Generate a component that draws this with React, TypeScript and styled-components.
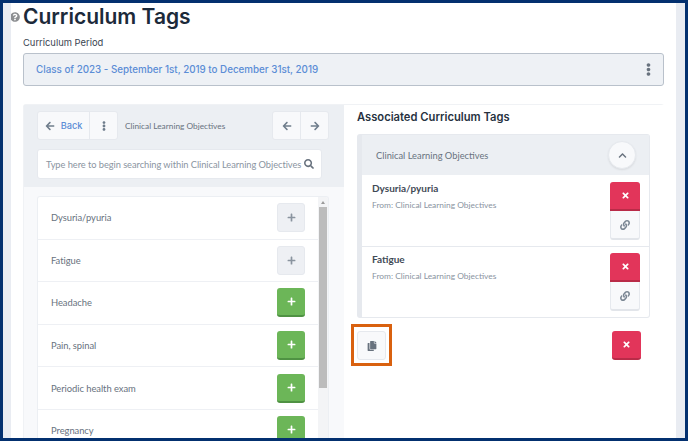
import styled, { createGlobalStyle } from 'styled-components';
import { FaArrowLeft, FaArrowRight, FaChevronUp, FaCopy, FaEllipsisV, FaLink, FaPlus, FaQuestionCircle, FaSearch, FaTimes } from 'react-icons/fa';

const HEADING = '"Inter", "Liberation Sans", sans-serif';
const BODY = '"Lato", "Noto Sans", sans-serif';

const GlobalStyle = createGlobalStyle`
    html, body {
        margin: 0;
        padding: 0;
        height: 441px;
        overflow: hidden;
        background: #fff;
    }
    * { box-sizing: border-box; }
`;

const Frame = styled.div`
    width: 688px;
    height: 441px;
    border: 3px solid #03306f;
    background: #e9ecf2;
    padding: 0 9px 0 8px;
    overflow: hidden;
`;

const Page = styled.main`
    height: 100%;
    background: #fff;
    padding: 0 12px;
    overflow: hidden;
    display: flex;
    flex-direction: column;
`;

const TitleRow = styled.div`
    display: flex;
    align-items: center;
    height: 28px;
    margin: 0 0 0 -13px;
    gap: 3px;
    color: #8d8f92;
    font-size: 10px;
    svg { flex: none; }
`;

const Title = styled.h1`
    margin: 0;
    font: 600 21px/28px ${HEADING};
    color: #1c2a3a;
`;

const FieldLabel = styled.div`
    margin-top: 5px;
    font: 400 9.4px/13px ${HEADING};
    color: #3a4552;
`;

const PeriodSelect = styled.div`
    margin-top: 4px;
    height: 33px;
    flex: none;
    display: flex;
    align-items: center;
    justify-content: space-between;
    padding: 0 8px 0 12px;
    background: #eef1f5;
    border: 1px solid #b9c1cb;
    border-radius: 3px;
    font: 500 9.8px ${HEADING};
    color: #5b8dd6;
    svg { color: #68727e; font-size: 13px; }
`;

const Columns = styled.div`
    margin-top: 18px;
    flex: 1;
    min-height: 0;
    display: grid;
    grid-template-columns: 320px 320px;
    border: 1px solid #f0f2f5;
    border-bottom: none;
    border-radius: 3px 3px 0 0;
`;

const LeftColumn = styled.section`
    background: #f8f9fb;
    overflow: hidden;
`;

const LeftHeader = styled.div`
    height: 82px;
    background: #eceff3;
    padding: 6px 15px 0 13px;
`;

const Toolbar = styled.div`
    display: flex;
    align-items: center;
    height: 29px;
`;

const ButtonGroup = styled.div<{ $right?: boolean }>`
    display: flex;
    height: 29px;
    margin-left: ${p => (p.$right ? 'auto' : '0')};
    background: #f8f9fb;
    border: 1px solid #e6e9ee;
    border-radius: 3px;
`;

const GroupButton = styled.button<{ $width: number }>`
    width: ${p => p.$width}px;
    display: flex;
    align-items: center;
    justify-content: center;
    gap: 6px;
    padding: 0;
    background: none;
    border: none;
    color: #6f7d8c;
    font-size: 10px;
    & + & { border-left: 1px solid #e6e9ee; }
`;

const BackLabel = styled.span`
    font: 500 9.2px ${HEADING};
    color: #5b8dd6;
`;

const ToolbarLabel = styled.span`
    margin-left: 7px;
    font: 400 8.3px ${BODY};
    color: #68727e;
`;

const SearchBox = styled.div`
    margin-top: 9px;
    width: 285px;
    height: 30px;
    display: flex;
    align-items: center;
    justify-content: space-between;
    padding: 0 7px 0 8px;
    background: #fff;
    border: 1px solid #e6e9ee;
    border-radius: 3px;
    font: 400 9.3px ${BODY};
    letter-spacing: -0.06px;
    color: #8a949f;
    white-space: nowrap;
    svg { color: #68727e; font-size: 10px; flex: none; }
`;

const ListBox = styled.div`
    position: relative;
    margin: 9px 15px 0 13px;
    background: #fff;
    border: 1px solid #eceff3;
    border-bottom: none;
    border-radius: 3px 3px 0 0;
    height: 242px;
    overflow: hidden;
    padding-right: 9px;
`;

const ScrollTrack = styled.div`
    position: absolute;
    top: 0;
    right: 0;
    bottom: 0;
    width: 10px;
    background: #f3f4f6;
`;

const ScrollThumb = styled.div`
    position: absolute;
    top: 10px;
    left: 1px;
    right: 1px;
    height: 181px;
    background: #bcbcbc;
`;

const ScrollArrow = styled.div`
    position: absolute;
    top: 4px;
    left: 3px;
    border: 2px solid transparent;
    border-top: none;
    border-bottom: 3px solid #9a9a9a;
`;

const ListRow = styled.div`
    height: 42.6px;
    display: flex;
    align-items: center;
    justify-content: space-between;
    padding: 0 14px 0 13px;
    border-bottom: 1px solid #eef0f4;
    font: 400 9.4px ${BODY};
    letter-spacing: -0.05px;
    color: #68727e;
`;

const AddButton = styled.button<{ $disabled?: boolean }>`
    width: 28px;
    height: 29px;
    flex: none;
    display: flex;
    align-items: center;
    justify-content: center;
    padding: 0;
    font-size: 9px;
    border-radius: 3px;
    border: ${p => (p.$disabled ? '1px solid #e6e9ee' : 'none')};
    border-bottom: ${p => (p.$disabled ? '1px solid #e6e9ee' : '2px solid #4f9243')};
    background: ${p => (p.$disabled ? '#eef0f4' : '#6cb658')};
    color: ${p => (p.$disabled ? '#8a949f' : '#fff')};
`;

const RightColumn = styled.section`
    padding: 0 14px 0 13px;
    background: #fff;
`;

const RightTitle = styled.h2`
    margin: 0;
    height: 24px;
    font: 600 11.2px/24px ${HEADING};
    color: #27323f;
`;

const Accordion = styled.div`
    margin-top: 5px;
    width: 293px;
    border: 1px solid #e6e9ee;
    border-left-width: 5px;
    border-radius: 3px;
`;

const AccordionHeader = styled.div`
    height: 40px;
    display: flex;
    align-items: center;
    justify-content: space-between;
    padding: 0 13px 0 14px;
    background: #eceff3;
    font: 400 9.3px ${BODY};
    color: #68727e;
`;

const RoundButton = styled.button`
    width: 28px;
    height: 28px;
    display: flex;
    align-items: center;
    justify-content: center;
    padding: 0;
    background: #f8f9fb;
    border: 1px solid #e6e9ee;
    border-radius: 50%;
    box-shadow: 0 1px 2px rgba(0, 0, 0, 0.08);
    color: #68727e;
    font-size: 9px;
`;

const TagRow = styled.div`
    height: 71px;
    display: flex;
    justify-content: space-between;
    padding: 7px 9px 0 10px;
    & + & {
        border-top: 1px solid #e6e9ee;
        padding-top: 6px;
    }
`;

const TagName = styled.div`
    font: 700 10px/13px ${BODY};
    color: #3f4a56;
`;

const TagSource = styled.div`
    margin-top: 4px;
    font: 400 8.4px/13px ${BODY};
    color: #8a949f;
`;

const ButtonStack = styled.div`
    display: flex;
    flex-direction: column;
    width: 30px;
`;

const DangerButton = styled.button<{ $stacked?: boolean }>`
    width: ${p => (p.$stacked ? '30px' : '29px')};
    height: 29px;
    flex: none;
    display: flex;
    align-items: center;
    justify-content: center;
    padding: 0;
    border: none;
    border-bottom: 2px solid #b92b48;
    border-radius: ${p => (p.$stacked ? '3px 3px 0 0' : '3px')};
    background: #e2355a;
    color: #fff;
    font-size: 9px;
`;

const LinkButton = styled.button`
    width: 30px;
    height: 29px;
    display: flex;
    align-items: center;
    justify-content: center;
    padding: 0;
    background: #f8f9fb;
    border: 1px solid #e6e9ee;
    border-top: none;
    border-bottom: 2px solid #e2e5ea;
    border-radius: 0 0 3px 3px;
    color: #7b8794;
    font-size: 10px;
`;

const FooterRow = styled.div`
    margin: 6px 9px 0 -6px;
    display: flex;
    align-items: center;
    justify-content: space-between;
`;

const Highlight = styled.div`
    padding: 4px 3px 3px;
    border: 3px solid #d9610f;
`;

const CopyButton = styled.button`
    width: 29px;
    height: 29px;
    display: flex;
    align-items: center;
    justify-content: center;
    padding: 0;
    background: #f8f9fb;
    border: 1px solid #e6e9ee;
    border-radius: 3px;
    color: #68727e;
    font-size: 10px;
`;

const tags = ['Dysuria/pyuria', 'Fatigue'];

const rows = [
    { label: 'Dysuria/pyuria', added: true },
    { label: 'Fatigue', added: true },
    { label: 'Headache', added: false },
    { label: 'Pain, spinal', added: false },
    { label: 'Periodic health exam', added: false },
    { label: 'Pregnancy', added: false },
];

const App = () => (
    <Frame>
        <GlobalStyle />
        <Page>
            <TitleRow>
                <FaQuestionCircle />
                <Title>Curriculum Tags</Title>
            </TitleRow>
            <FieldLabel>Curriculum Period</FieldLabel>
            <PeriodSelect>
                Class of 2023 - September 1st, 2019 to December 31st, 2019
                <FaEllipsisV />
            </PeriodSelect>
            <Columns>
                <LeftColumn>
                    <LeftHeader>
                        <Toolbar>
                            <ButtonGroup>
                                <GroupButton $width={51}>
                                    <FaArrowLeft />
                                    <BackLabel>Back</BackLabel>
                                </GroupButton>
                                <GroupButton $width={28}>
                                    <FaEllipsisV />
                                </GroupButton>
                            </ButtonGroup>
                            <ToolbarLabel>Clinical Learning Objectives</ToolbarLabel>
                            <ButtonGroup $right>
                                <GroupButton $width={27}>
                                    <FaArrowLeft />
                                </GroupButton>
                                <GroupButton $width={28}>
                                    <FaArrowRight />
                                </GroupButton>
                            </ButtonGroup>
                        </Toolbar>
                        <SearchBox>
                            Type here to begin searching within Clinical Learning Objectives
                            <FaSearch />
                        </SearchBox>
                    </LeftHeader>
                    <ListBox>
                        {rows.map(row => (
                            <ListRow key={row.label}>
                                {row.label}
                                <AddButton $disabled={row.added}>
                                    <FaPlus />
                                </AddButton>
                            </ListRow>
                        ))}
                        <ScrollTrack>
                            <ScrollArrow />
                            <ScrollThumb />
                        </ScrollTrack>
                    </ListBox>
                </LeftColumn>
                <RightColumn>
                    <RightTitle>Associated Curriculum Tags</RightTitle>
                    <Accordion>
                        <AccordionHeader>
                            Clinical Learning Objectives
                            <RoundButton>
                                <FaChevronUp />
                            </RoundButton>
                        </AccordionHeader>
                        {tags.map(tag => (
                            <TagRow key={tag}>
                                <div>
                                    <TagName>{tag}</TagName>
                                    <TagSource>From: Clinical Learning Objectives</TagSource>
                                </div>
                                <ButtonStack>
                                    <DangerButton $stacked>
                                        <FaTimes />
                                    </DangerButton>
                                    <LinkButton>
                                        <FaLink />
                                    </LinkButton>
                                </ButtonStack>
                            </TagRow>
                        ))}
                    </Accordion>
                    <FooterRow>
                        <Highlight>
                            <CopyButton>
                                <FaCopy />
                            </CopyButton>
                        </Highlight>
                        <DangerButton>
                            <FaTimes />
                        </DangerButton>
                    </FooterRow>
                </RightColumn>
            </Columns>
        </Page>
    </Frame>
);

export default App;
